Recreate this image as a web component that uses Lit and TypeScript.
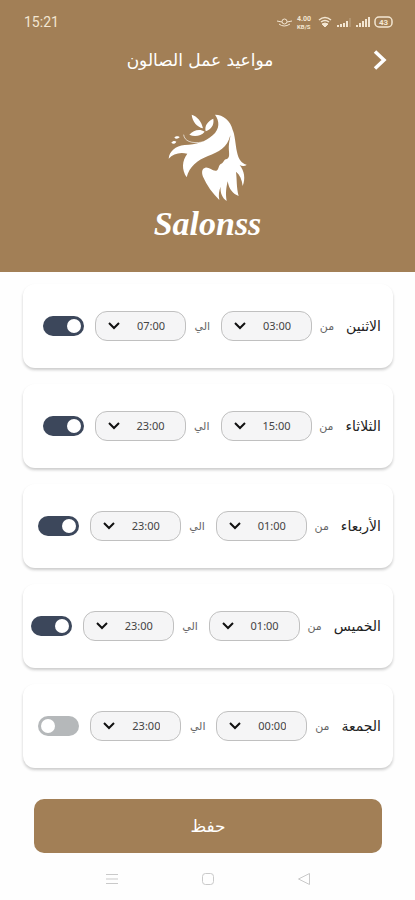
import { LitElement, html, css, svg } from "lit";
import { customElement, property } from "lit/decorators.js";

const HOURS = Array.from({ length: 24 }, (_, h) => `${String(h).padStart(2, "0")}:00`);

const DAYS = [
  { id: "mon", name: "الاثنين", from: "03:00", to: "07:00", open: true },
  { id: "tue", name: "الثلاثاء", from: "15:00", to: "23:00", open: true },
  { id: "wed", name: "الأربعاء", from: "01:00", to: "23:00", open: true },
  { id: "thu", name: "الخميس", from: "01:00", to: "23:00", open: true },
  { id: "fri", name: "الجمعة", from: "00:00", to: "23:00", open: false },
];

@customElement("time-select")
class TimeSelect extends LitElement {
  @property() value = "";
  @property() name = "";

  static styles = css`
    :host { display: block; flex: 0 1 91px; min-width: 0; direction: ltr; }
    .box { display: grid; align-items: center; }
    .field {
      grid-area: 1 / 1; width: 100%; height: 30px; margin: 0; padding: 0 20px 0 0;
      box-sizing: border-box; appearance: none; border: 1px solid #c0c0c0; border-radius: 12px;
      background: #f5f5f6; color: #444; font: 11px/16px "Noto Sans", sans-serif;
      text-align: right; text-align-last: right;
    }
    .arrow { grid-area: 1 / 1; margin-left: 13px; pointer-events: none; z-index: 1; }
  `;

  render() {
    return html`<div class="box">
      <select class="field" aria-label=${this.name}>
        ${HOURS.map((h) => html`<option ?selected=${h === this.value}>${h}</option>`)}
      </select>
      <svg class="arrow" width="12" height="8" viewBox="0 0 12 8" fill="none" stroke="#111" stroke-width="2">
        <path d="M1 1l5 5 5-5" />
      </svg>
    </div>`;
  }
}

@customElement("day-card")
class DayCard extends LitElement {
  @property({ attribute: false }) day = DAYS[0];

  static styles = css`
    :host { display: block; }
    .card {
      display: flex; align-items: center; height: 84px; padding: 0 12px 0 8px; box-sizing: border-box;
      background: #fff; border-radius: 12px; box-shadow: 0 2px 3px rgba(0, 0, 0, 0.2);
    }
    .day { font-size: 14px; color: #222; white-space: nowrap; margin-left: 12px; }
    .word { font-size: 11px; color: #666; margin-left: 7px; width: 15px; white-space: nowrap; }
    .to { width: 17px; margin-right: 11px; }
    .switch {
      appearance: none; flex: none; width: 41px; height: 20px; margin: 0 11px 0 0; padding: 3px;
      box-sizing: border-box; border-radius: 10px; background: #b5b8ba; display: flex; direction: ltr;
    }
    .switch::before { content: ""; width: 14px; height: 14px; border-radius: 50%; background: #fff; }
    .switch:checked { background: #3c475b; justify-content: flex-end; }
  `;

  render() {
    const d = this.day;
    return html`<div class="card">
      <label class="day" for="open">${d.name}</label>
      <span class="word">من</span>
      <time-select .value=${d.from} .name=${`${d.name} من`}></time-select>
      <span class="word to">الي</span>
      <time-select .value=${d.to} .name=${`${d.name} الي`}></time-select>
      <input class="switch" id="open" type="checkbox" ?checked=${d.open} />
    </div>`;
  }
}

const logo = svg`
  <path d="M153 20C178 20 200 38 206 66C213 80 214 108 219 132C223 154 234 167 248 170C241 176 233 175 227 171C241 188 245 212 236 234C234 214 227 200 216 191C219 215 217 238 224 264C207 258 195 244 191 220C187 238 184 254 188 279C175 270 168 254 170 236C165 248 163 260 166 276C146 256 128 232 117 206C112 192 114 181 124 179C136 177 145 190 157 188C165 185 163 172 170 168C181 165 177 154 189 153C201 147 192 128 195 108C196 98 199 90 199 82C190 120 164 132 132 144C100 156 76 176 68 208C52 184 54 158 70 137C48 131 27 137 14 152C16 130 34 114 62 111C96 111 124 102 146 82C168 62 167 40 153 20Z"/>
  <path d="M83 20C99 25 113 40 117 61C98 56 86 42 83 20ZM148 32C151 52 141 64 125 70C121 53 131 40 148 32ZM76 80C88 66 108 62 122 71C111 84 92 88 76 80ZM22 104C26 98 33 98 37 101C33 108 27 109 22 104ZM31 89C35 84 44 84 47 88C42 93 35 93 31 89Z"/>
  <path d="M59 80C61 99 82 108 116 102" fill="none" stroke="#fff" stroke-width="2"/>`;

@customElement("app-root")
class AppRoot extends LitElement {
  static styles = css`
    :host { display: block; min-height: 100vh; background: #fefefe; font-family: "DejaVu Sans", sans-serif; }
    .header { background: #a27f56; color: #fff; height: 272px; display: flex; flex-direction: column; }
    .status { display: flex; justify-content: space-between; align-items: center; padding: 12px 22px 0 24px; height: 20px; color: #f3e6d2; }
    .clock { font: 14px Roboto, sans-serif; }
    .bar { display: grid; grid-template-columns: 15px 1fr; align-items: center; padding: 0 28px; height: 56px; }
    .back { border: 0; padding: 0; background: none; display: flex; justify-content: center; }
    .title { margin: 0; text-align: center; font-size: 17px; font-weight: 400; color: #fff; }
    .brand { display: flex; flex-direction: column; align-items: center; padding-top: 20px; }
    .name { font: italic 700 34px/40px "Liberation Serif", serif; }
    .list { display: flex; flex-direction: column; gap: 16px; padding: 12px 22px 0 23px; }
    .save {
      display: block; width: calc(100% - 67px); height: 54px; margin: 31px 33px 0 34px; border: 0;
      border-radius: 10px; background: #a27f56; color: #fff; font: 17px "DejaVu Sans", sans-serif;
    }
    .nav { display: flex; justify-content: center; gap: 82px; padding-top: 19px; }
    .key { border: 0; padding: 0; background: none; display: flex; }
  `;

  render() {
    return html`
      <header class="header">
        <div class="status">
          <span class="clock">15:21</span>
          <svg width="116" height="16" viewBox="0 0 116 16" fill="none" stroke="#f3e6d2">
            <path d="M0 7L5 8M15 7L10 8M2 10Q7 14 13 10" />
            <circle cx="7.500" cy="7.500" r="2.500" />
            <text x="20" y="7" font-family="Roboto" font-weight="700" font-size="7" fill="#f3e6d2" stroke="none">4.00</text>
            <text x="20" y="15" font-family="Roboto" font-weight="700" font-size="6" fill="#f3e6d2" stroke="none">KB/S</text>
            <path d="M42 6Q48 1 54 6M44 8Q48 5 52 8" stroke-width="1.500" />
            <path d="M45 10Q48 8 51 10L48 13Z" fill="#f3e6d2" />
            <path d="M61 13v-2M64 13v-3M67 13v-4M70 13v-6" stroke-width="2" />
            <path d="M73 13v-9" opacity=".4" />
            <path d="M80 13v-2M83 13v-4M86 13v-6M89 13v-8M92 13v-10" stroke-width="2" />
            <rect x="98" y="3" width="17" height="10" rx="4" stroke-width="1.500" />
            <text x="102" y="11" font-family="Roboto" font-weight="700" font-size="8" fill="#f3e6d2" stroke="none">43</text>
          </svg>
        </div>
        <div class="bar" dir="rtl">
          <button class="back" aria-label="رجوع">
            <svg width="15" height="22" viewBox="0 0 15 22" fill="none" stroke="#fff" stroke-width="3.500"><path d="M3 2.500L12 11L3 19.500" /></svg>
          </button>
          <h1 class="title">مواعيد عمل الصالون</h1>
        </div>
        <div class="brand">
          <svg width="88" height="96" viewBox="0 0 264 288" fill="#fff" aria-hidden="true">${logo}</svg>
          <span class="name">Salonss</span>
        </div>
      </header>
      <main>
        <section class="list" dir="rtl">${DAYS.map((d) => html`<day-card .day=${d}></day-card>`)}</section>
        <button class="save">حفظ</button>
      </main>
      <nav class="nav">
        <button class="key" aria-label="القائمة"><svg width="14" height="14" fill="none" stroke="#c9c9c9"><path d="M1 2.500h12M1 7h12M1 11.500h12" /></svg></button>
        <button class="key" aria-label="الرئيسية"><svg width="14" height="14" fill="none" stroke="#c9c9c9"><rect x="1.500" y="1.500" width="11" height="11" rx="3" /></svg></button>
        <button class="key" aria-label="السابق"><svg width="14" height="14" fill="none" stroke="#c9c9c9"><path d="M12.500 1.500v11L1.500 7z" stroke-linejoin="round" /></svg></button>
      </nav>`;
  }
}
